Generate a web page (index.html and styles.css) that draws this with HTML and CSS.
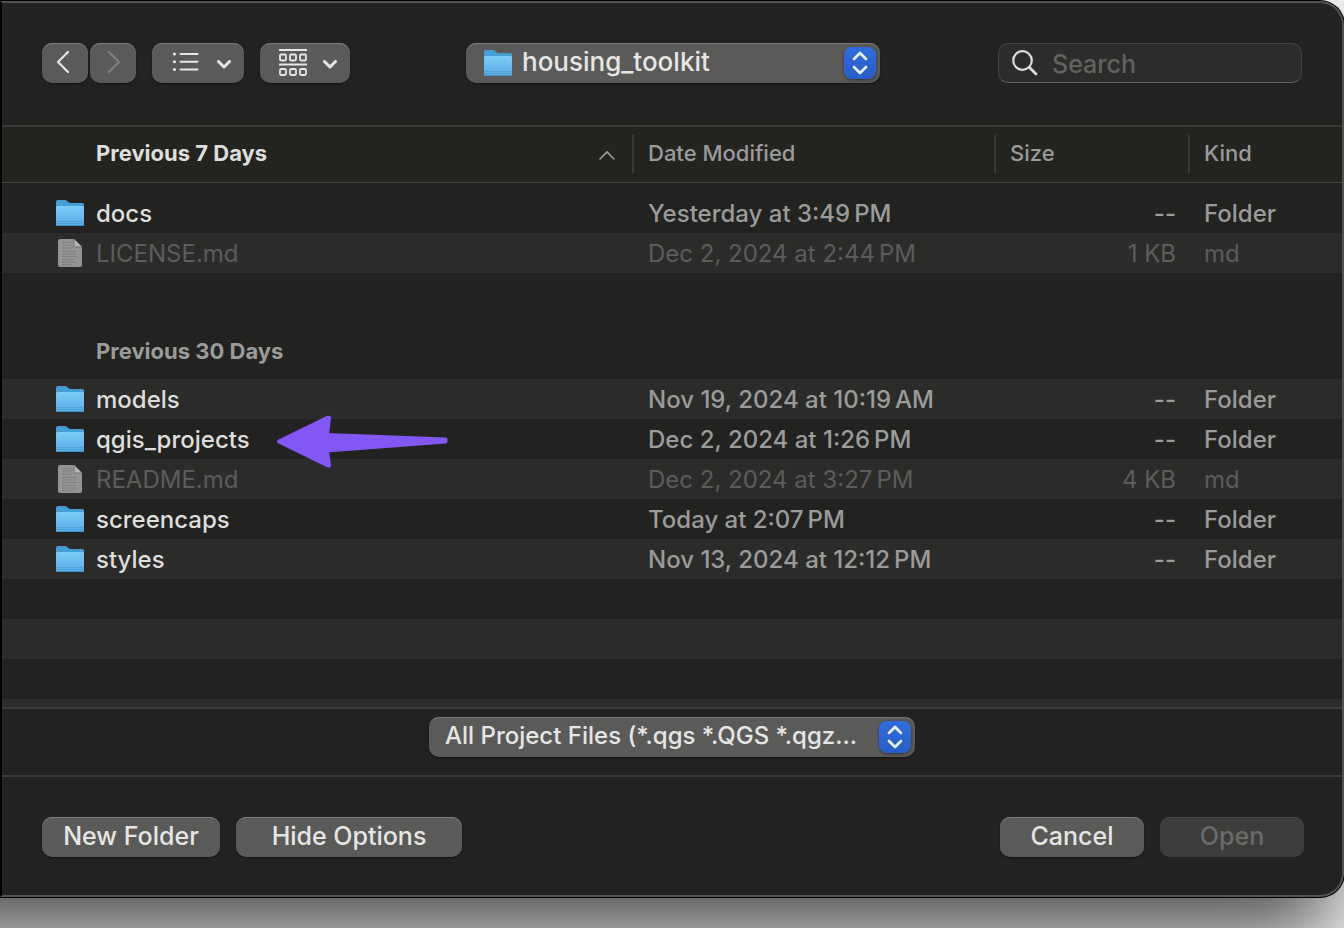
FILE: index.html
```html
<!DOCTYPE html>
<html lang="en">
<head>
<meta charset="utf-8">
<title>Open Project</title>
<meta name="viewport" content="width=device-width, initial-scale=1">
<link rel="stylesheet" href="styles.css">
</head>
<body>
<svg class="defs" aria-hidden="true">
  <defs>
    <linearGradient id="folder-front" x1="0" y1="0" x2="0" y2="1">
      <stop offset="0" stop-color="#7accf8"/>
      <stop offset="1" stop-color="#58abe2"/>
    </linearGradient>
    <symbol id="folder" viewBox="0 0 28 26">
      <path d="M0 2Q0 0 2 0H9Q10 0 11 1L13 2.6Q13.500 3 14.500 3H26.500Q28 3 28 4.500V10H0Z" fill="#459fd6"/>
      <path d="M0 7.500Q0 6 1.500 6H26.500Q28 6 28 7.500V24.500Q28 26 26.500 26H1.500Q0 26 0 24.500Z" fill="url(#folder-front)"/>
      <path d="M0 21.500H28M0 23.500H28" stroke="#4592c8" stroke-width=".5"/>
      <path d="M.5 25.500H27.500" stroke="#3d8fc9"/>
    </symbol>
    <symbol id="document" viewBox="0 0 24 28">
      <path d="M2 0H16L24 8V26Q24 28 22 28H2Q0 28 0 26V2Q0 0 2 0Z" fill="#949494"/>
      <path d="M4 3.500H14M5 6H14.500M4 9H13M4 12.500H19M4 15H18M4 17.500H19.500M4 20.500H17M4 23H19M4 25.500H15" stroke="#7c7c7c" stroke-width="1.200" stroke-dasharray="3 .6 1.500 .5"/>
      <path d="M16 0L24 8H17Q16 8 16 7Z" fill="#b4b4b4"/>
      <path d="M16 0V7Q16 8 17 8H24" fill="none" stroke="#666" stroke-width=".8"/>
    </symbol>
    <symbol id="chevron" viewBox="0 0 14 9">
      <path d="M1.500 1.500L7 7L12.500 1.500" fill="none" stroke="currentColor" stroke-width="3" stroke-linecap="round" stroke-linejoin="round"/>
    </symbol>
    <symbol id="updown" viewBox="0 0 16 24">
      <path d="M2 8L8 2L14 8M2 16L8 22L14 16" fill="none" stroke="currentColor" stroke-width="2.800" stroke-linecap="round" stroke-linejoin="round"/>
    </symbol>
  </defs>
</svg>

<main class="dialog">
  <header class="toolbar">
    <div class="nav">
      <button class="control nav-button" type="button" aria-label="Back">
        <svg width="14" height="24" viewBox="0 0 14 24"><path d="M12 2L2 12L12 22" fill="none" stroke="currentColor" stroke-width="2.200" stroke-linecap="round" stroke-linejoin="round"/></svg>
      </button>
      <button class="control nav-button nav-forward" type="button" aria-label="Forward" disabled>
        <svg width="14" height="24" viewBox="0 0 14 24"><path d="M2 2L12 12L2 22" fill="none" stroke="currentColor" stroke-width="2.200" stroke-linecap="round" stroke-linejoin="round"/></svg>
      </button>
    </div>
    <div class="views">
      <button class="control view-button view-list" type="button" aria-label="View as list" aria-haspopup="menu">
        <svg width="28" height="22" viewBox="0 0 28 22" fill="none" stroke="currentColor" stroke-width="2" stroke-linecap="round"><path d="M9.500 2H26.500M9.500 9.800H26.500M9.500 17.600H26.500"/><path d="M3.400 2H3.500M3.400 9.800H3.500M3.400 17.600H3.500" stroke-width="3"/></svg>
        <svg class="chevron" width="14" height="9"><use href="#chevron"/></svg>
      </button>
      <button class="control view-button" type="button" aria-label="Group by" aria-haspopup="menu">
        <svg width="28" height="28" viewBox="0 0 28 28" fill="none" stroke="currentColor" stroke-width="1.800"><path d="M0 1H28M0 15.500H28"/><rect x="1" y="5.500" width="6" height="6" rx="1.200"/><rect x="11" y="5.500" width="6" height="6" rx="1.200"/><rect x="21" y="5.500" width="6" height="6" rx="1.200"/><rect x="1" y="20" width="6" height="6" rx="1.200"/><rect x="11" y="20" width="6" height="6" rx="1.200"/><rect x="21" y="20" width="6" height="6" rx="1.200"/></svg>
        <svg class="chevron" width="14" height="9"><use href="#chevron"/></svg>
      </button>
    </div>
    <div class="picker picker-path">
      <svg class="picker-folder" width="28" height="26" aria-hidden="true"><use href="#folder"/></svg>
      <select class="control" aria-label="Current folder"><option>housing_toolkit</option></select>
      <span class="stepper"><svg width="16" height="24" aria-hidden="true"><use href="#updown"/></svg></span>
    </div>
    <label class="search">
      <svg width="26" height="26" viewBox="0 0 26 26" fill="none" stroke="currentColor" stroke-linecap="round" aria-hidden="true"><circle cx="10.500" cy="10.500" r="9.300" stroke-width="2.200"/><path d="M17.500 17.500L24 24" stroke-width="2.800"/></svg>
      <input type="search" placeholder="Search" aria-label="Search">
    </label>
  </header>

  <section class="list">
    <table class="files">
      <colgroup><col><col class="col-date"><col class="col-size"><col class="col-kind"></colgroup>
      <thead>
        <tr>
          <th scope="col" class="sorted"><div class="head"><span>Previous 7 Days</span><svg width="16" height="10" viewBox="0 0 16 10" aria-hidden="true"><path d="M1 9L8 2L15 9" fill="none" stroke="currentColor" stroke-width="1.600" stroke-linecap="round"/></svg></div></th>
          <th scope="col"><div class="head divided">Date Modified</div></th>
          <th scope="col"><div class="head divided">Size</div></th>
          <th scope="col"><div class="head divided">Kind</div></th>
        </tr>
      </thead>
      <tbody>
        <tr class="spacer"><td colspan="4"></td></tr>
        <tr><td><div class="name"><svg width="28" height="26"><use href="#folder"/></svg>docs</div></td><td>Yesterday at 3:49&#8198;PM</td><td>--</td><td>Folder</td></tr>
        <tr class="stripe dim"><td><div class="name"><svg width="28" height="28"><use href="#document"/></svg>LICENSE.md</div></td><td>Dec 2, 2024 at 2:44&#8198;PM</td><td>1 KB</td><td>md</td></tr>
      </tbody>
      <tbody>
        <tr class="group"><th colspan="4" scope="rowgroup">Previous 30 Days</th></tr>
        <tr class="stripe"><td><div class="name"><svg width="28" height="26"><use href="#folder"/></svg>models</div></td><td>Nov 19, 2024 at 10:19&#8198;AM</td><td>--</td><td>Folder</td></tr>
        <tr><td><div class="name"><svg width="28" height="26"><use href="#folder"/></svg><span class="marked">qgis_projects
          <svg class="pointer" width="173" height="54" viewBox="0 0 173 54" aria-hidden="true"><path d="M3 26.500L51 3L53 2.800L51 20L169.500 24.500V26.500L51 35.500L53 50.500L51 50Z" fill="#8257f5" stroke="#8257f5" stroke-width="4" stroke-linejoin="round"/></svg></span></div></td><td>Dec 2, 2024 at 1:26&#8198;PM</td><td>--</td><td>Folder</td></tr>
        <tr class="stripe dim"><td><div class="name"><svg width="28" height="28"><use href="#document"/></svg>README.md</div></td><td>Dec 2, 2024 at 3:27&#8198;PM</td><td>4 KB</td><td>md</td></tr>
        <tr><td><div class="name"><svg width="28" height="26"><use href="#folder"/></svg>screencaps</div></td><td>Today at 2:07&#8198;PM</td><td>--</td><td>Folder</td></tr>
        <tr class="stripe"><td><div class="name"><svg width="28" height="26"><use href="#folder"/></svg>styles</div></td><td>Nov 13, 2024 at 12:12&#8198;PM</td><td>--</td><td>Folder</td></tr>
      </tbody>
    </table>
    <div class="empty-rows"></div>
  </section>

  <section class="filter">
    <div class="picker picker-filter">
      <select class="control" aria-label="File type"><option>All Project Files (*.qgs *.QGS *.qgz...</option></select>
      <span class="stepper"><svg width="16" height="24" aria-hidden="true"><use href="#updown"/></svg></span>
    </div>
  </section>

  <footer class="actions">
    <button class="control action action-new" type="button">New Folder</button>
    <button class="control action action-options" type="button">Hide Options</button>
    <button class="control action action-end" type="button">Cancel</button>
    <button class="control action" type="button" disabled>Open</button>
  </footer>
</main>
</body>
</html>
```
FILE: styles.css
```css
* {
  box-sizing: border-box;
}

body {
  display: flex;
  flex-direction: column;
  min-height: 100vh;
  margin: 0;
  padding: 1px 0 31px;
  overflow-x: hidden;
  background: #f4f4f4;
  font-family: Inter, "Liberation Sans", sans-serif;
  font-size: 24px;
  font-weight: 500;
  color: #dededd;
}

.defs {
  position: absolute;
  width: 0;
  height: 0;
}

.dialog {
  position: relative;
  flex: 1;
  display: flex;
  flex-direction: column;
  border: 2px solid #525251;
  border-left-color: #000;
  border-radius: 0 24px 24px 0;
  background: #222221;
  box-shadow: 0 0 0 1px #000;
}

/* Drop shadow that continues past the left edge of the window */
.dialog::before {
  content: "";
  position: absolute;
  z-index: -1;
  inset: 0 0 0 -160px;
  border-radius: 24px;
  box-shadow: -10px 40px 80px rgba(0, 0, 0, 0.67);
}

.control {
  height: 40px;
  border: 0;
  border-radius: 10px;
  background: #5a5a59;
  box-shadow: inset 0 1px 0 #7a7a79, 0 1px 2px rgba(0, 0, 0, 0.5);
  color: #e6e6e5;
  font: inherit;
  font-size: 25px;
  line-height: 36px;
}

.toolbar {
  display: flex;
  align-items: flex-start;
  height: 122px;
  padding: 40px 40px 0;
}

.nav {
  display: flex;
  gap: 2px;
}

.nav-button {
  display: grid;
  place-items: center;
  width: 46px;
  padding: 0 4px 2px 0;
}

.nav-forward {
  padding: 0 0 2px 2px;
  color: #7f7f7e;
}

.views {
  display: flex;
  gap: 16px;
  margin-left: 16px;
}

.view-button {
  display: flex;
  align-items: center;
  gap: 16px;
  width: 90px;
  padding: 0 0 0 19px;
}

.view-list {
  gap: 18px;
  width: 92px;
}

.chevron {
  margin-top: 2px;
}

.picker {
  position: relative;
}

.picker select {
  appearance: none;
  width: 100%;
  padding: 0 44px 2px 16px;
}

.picker-path {
  width: 414px;
  margin-left: 116px;
}

.picker-path select {
  padding-left: 56px;
  font-size: 26px;
}

.picker-folder {
  position: absolute;
  top: 7px;
  left: 18px;
}

.stepper {
  position: absolute;
  top: 4px;
  right: 4px;
  display: grid;
  place-items: center;
  width: 32px;
  height: 32px;
  border-radius: 8px;
  background: linear-gradient(#2f6ce0, #285dc6);
  box-shadow: 0 1px 3px rgba(0, 0, 0, 0.5);
  color: #e8eefb;
  pointer-events: none;
}

.search {
  display: flex;
  align-items: center;
  gap: 14px;
  width: 304px;
  height: 40px;
  margin-left: auto;
  padding: 0 13px;
  border: 1px solid #414140;
  border-bottom-color: #636362;
  border-radius: 10px;
  background: #2c2c2b;
}

.search input {
  flex: 1;
  min-width: 0;
  padding: 2px 0 0;
  border: 0;
  outline: 0;
  background: none;
  color: inherit;
  font: inherit;
  font-size: 25px;
}

.search input::placeholder {
  color: #626261;
}

.list {
  flex: 1;
  display: flex;
  flex-direction: column;
  border-top: 2px solid #3a3a39;
  border-bottom: 2px solid #3a3a39;
}

.files {
  width: 100%;
  table-layout: fixed;
  border-collapse: separate;
  border-spacing: 0;
}

.col-date {
  width: 362px;
}

.col-size {
  width: 194px;
}

.col-kind {
  width: 154px;
}

thead tr {
  background: #23231f;
}

th,
td {
  padding: 0;
  text-align: left;
  white-space: nowrap;
}

thead th {
  height: 56px;
  padding-top: 8px;
  border-bottom: 1px solid #464645;
  color: #9b9b9a;
  font-size: 22px;
  font-weight: 500;
  vertical-align: top;
}

.head {
  display: flex;
  align-items: center;
  height: 38px;
  padding-bottom: 2px;
}

.divided {
  padding-left: 14px;
  border-left: 2px solid #3a3a39;
}

.sorted .head {
  justify-content: space-between;
  padding: 0 17px 2px 94px;
}

.sorted svg {
  margin-top: 4px;
}

.sorted span {
  color: #dededd;
  font-weight: 700;
}

.spacer td {
  height: 10px;
}

tbody td {
  height: 40px;
  color: #9b9b9a;
}

tbody td:nth-child(2),
tbody td:nth-child(4) {
  padding-left: 16px;
}

tbody td:nth-child(3) {
  padding-right: 12px;
  text-align: right;
}

.stripe {
  background: #2b2b2a;
}

.name {
  display: flex;
  align-items: center;
  gap: 12px;
  padding-left: 54px;
  color: #dededd;
}

.dim td,
.dim .name {
  color: #5c5c5b;
  font-weight: 400;
}

.group th {
  height: 106px;
  padding: 50px 0 0 94px;
  color: #9b9b9a;
  font-size: 22px;
  font-weight: 700;
}

.marked {
  position: relative;
}

.pointer {
  position: absolute;
  top: 50%;
  left: 100%;
  margin: -24px 0 0 26px;
}

.empty-rows {
  flex: 1;
  background: repeating-linear-gradient(#222221 0 40px, #2b2b2a 40px 80px);
}

.filter {
  display: flex;
  justify-content: center;
  padding: 8px 0 18px;
  border-bottom: 2px solid #3a3a39;
}

.picker-filter {
  width: 486px;
}

.picker-filter select {
  font-size: 24px;
}

.actions {
  display: flex;
  gap: 16px;
  padding: 40px 38px 38px 40px;
}

.action {
  width: 144px;
  padding: 0 0 2px;
}

.action-new {
  width: 178px;
}

.action-options {
  width: 226px;
}

.action-end {
  margin-left: auto;
}

.action:disabled {
  background: #3c3c3b;
  box-shadow: inset 0 1px 0 #4a4a49;
  color: #6b6b6a;
}
```
